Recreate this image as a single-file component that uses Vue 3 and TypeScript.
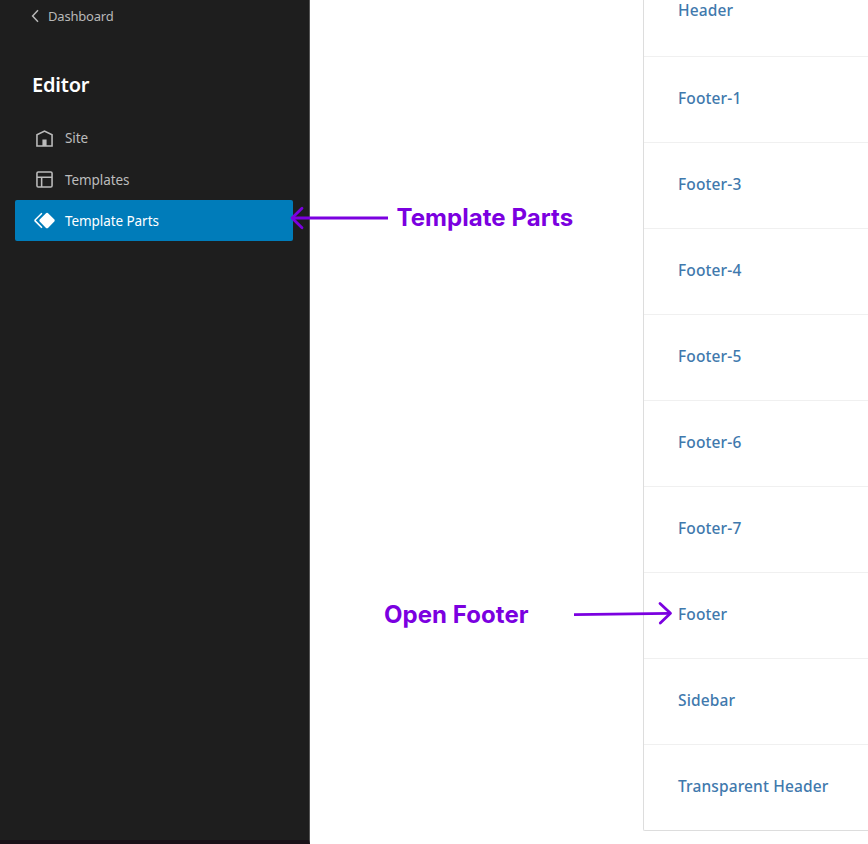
<script setup lang="ts">
interface NavItem {
  label: string
  icon: string
  active?: boolean
}

const navItems: NavItem[] = [
  {
    label: 'Site',
    icon: 'M12 4L4 7.9V20h16V7.9L12 4zm6.5 14.5H14V13h-4v5.5H5.5V8.8L12 5.7l6.5 3.1v9.7z',
  },
  {
    label: 'Templates',
    icon: 'M18 5.5H6a.5.5 0 00-.5.5v3h13V6a.5.5 0 00-.5-.5zm.5 5H10v8h8a.5.5 0 00.5-.5v-7.5zm-10 0h-3V18a.5.5 0 00.5.5h2.5v-8zM6 4h12a2 2 0 012 2v12a2 2 0 01-2 2H6a2 2 0 01-2-2V6a2 2 0 012-2z',
  },
  {
    label: 'Template Parts',
    icon: 'M21.3 10.8l-5.6-5.6c-.7-.7-1.8-.7-2.5 0l-5.6 5.6c-.7.7-.7 1.8 0 2.5l5.6 5.6c.3.3.8.5 1.2.5s.9-.2 1.2-.5l5.6-5.6c.8-.7.8-1.9.1-2.5zm-17.6 1L10 5.5l-1-1-6.3 6.3c-.7.7-.7 1.8 0 2.5L9 19.5l1.1-1.1-6.3-6.3c-.2 0-.2-.2-.1-.3z',
    active: true,
  },
]

const parts: string[] = [
  'Header',
  'Footer-1',
  'Footer-3',
  'Footer-4',
  'Footer-5',
  'Footer-6',
  'Footer-7',
  'Footer',
  'Sidebar',
  'Transparent Header',
]
</script>

<template>
  <div class="screen">
    <aside class="sidebar">
      <a class="back">
        <svg class="chevron" viewBox="0 0 8 14"><path d="M7 1.2 1.6 7 7 12.8" /></svg>
        <span>Dashboard</span>
      </a>
      <h1 class="title">Editor</h1>
      <nav class="nav">
        <a v-for="item in navItems" :key="item.label" class="nav-item" :class="{ active: item.active }">
          <svg class="nav-icon" viewBox="0 0 24 24"><path :d="item.icon" /></svg>
          <span>{{ item.label }}</span>
        </a>
      </nav>
    </aside>
    <main class="content">
      <ul class="list">
        <li v-for="part in parts" :key="part" class="row">
          <a class="link">{{ part }}</a>
        </li>
      </ul>
    </main>

    <svg class="arrow arrow-parts" viewBox="0 0 100 26">
      <path d="M98 13H2" />
      <path class="head" d="M12 3.2 2 13l10 9.8" />
    </svg>
    <span class="note note-parts">Template Parts</span>
    <span class="note note-footer">Open Footer</span>
    <svg class="arrow arrow-footer" viewBox="0 0 100 26">
      <path d="M1 14.7 97 13.3" />
      <path class="head" d="M87 3.4l10.5 9.9L87.3 23" />
    </svg>
  </div>
</template>

<style>
body {
  margin: 0;
  background: #fff;
}
</style>

<style scoped>
.screen {
  position: relative;
  display: flex;
  width: 868px;
  height: 844px;
  overflow: hidden;
  background: #fff;
  font-family: 'Noto Sans', 'Open Sans', sans-serif;
}

.sidebar {
  box-sizing: border-box;
  flex: none;
  width: 310px;
  padding: 6px 16px 0 15px;
  border-right: 1px solid #555;
  border-bottom: 4px solid #1b1118;
  background: #1e1e1e;
}

.back {
  display: flex;
  align-items: center;
  gap: 9px;
  height: 20px;
  padding-left: 16px;
  color: #b8b8b8;
  font-size: 13px;
  letter-spacing: -0.2px;
}

.chevron {
  width: 8px;
  height: 14px;
  fill: none;
  stroke: #b8b8b8;
  stroke-width: 1.5;
}

.title {
  margin: 45px 0 0 17px;
  color: #fff;
  font-size: 20px;
  font-weight: 600;
  line-height: 28px;
  letter-spacing: -0.2px;
}

.nav {
  margin-top: 18.6px;
}

.nav-item {
  display: flex;
  box-sizing: border-box;
  align-items: center;
  gap: 8px;
  width: 278px;
  height: 41.3px;
  padding-left: 17px;
  border-radius: 2px;
  color: #bcbcbc;
  font-size: 13.5px;
  letter-spacing: -0.07px;
}

.nav-item.active {
  background: #007cba;
  color: #fff;
}

.nav-icon {
  width: 25px;
  height: 25px;
  fill: currentColor;
}

.content {
  flex: 1;
  padding-left: 333px;
}

.list {
  box-sizing: border-box;
  height: 831px;
  margin: 0;
  padding: 0;
  border: solid #ddd;
  border-width: 0 0 1px 1px;
  border-radius: 0 0 0 2px;
  list-style: none;
}

.row {
  display: flex;
  box-sizing: border-box;
  align-items: center;
  height: 86px;
  padding: 0 0 4px 34px;
  border-bottom: 1px solid #f0f0f0;
}

.row:first-child {
  height: 57px;
  padding-bottom: 36px;
}

.row:last-child {
  border-bottom: 0;
}

.link {
  color: #3f79ad;
  font-size: 15.5px;
  font-weight: 500;
  line-height: 20px;
  letter-spacing: 0.13px;
  white-space: nowrap;
}

.note {
  position: absolute;
  color: #7b00e0;
  font-family: Inter, sans-serif;
  font-size: 24px;
  font-weight: 700;
  line-height: 30px;
  letter-spacing: 0.05px;
  white-space: nowrap;
}

.note-parts {
  top: 203px;
  left: 396.5px;
}

.note-footer {
  top: 600px;
  left: 384px;
}

.arrow {
  position: absolute;
  width: 100px;
  height: 26px;
  fill: none;
  stroke: #7b00e0;
  stroke-width: 2.8;
}

.head {
  stroke-linecap: round;
  stroke-linejoin: round;
}

.arrow-parts {
  top: 205px;
  left: 290px;
}

.arrow-footer {
  top: 600px;
  left: 573px;
}
</style>
